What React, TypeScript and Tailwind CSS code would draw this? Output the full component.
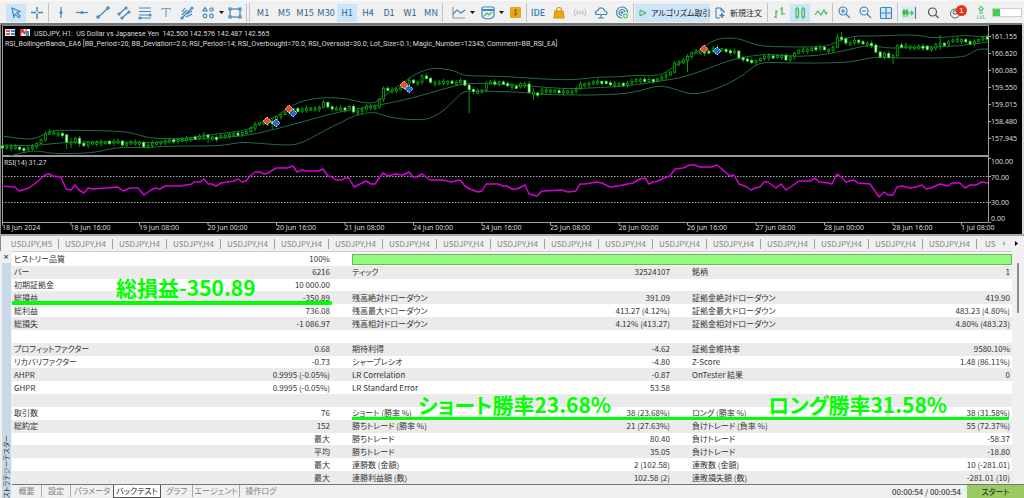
import React from "react";

type Point = [number, number];

const JP = "font-['Noto_Sans_CJK_JP',sans-serif]";

/* ---------- chart data ---------- */

const pricePath: Point[] = [
  [2, 146], [15, 147], [20, 149], [28, 148], [32, 147], [36, 144], [41, 140], [45, 134], [49, 132], [53, 133],
  [62, 134], [66, 142], [71, 142], [75, 138], [79, 143], [83, 146], [88, 142], [92, 143], [100, 142], [118, 141],
  [122, 145], [130, 142], [139, 142], [143, 147], [147, 146], [152, 143], [160, 142], [170, 140], [185, 139],
  [200, 136], [204, 135], [208, 137], [216, 138], [220, 136], [233, 134], [246, 132], [250, 129], [254, 125],
  [258, 123], [267, 121], [272, 123], [276, 117], [280, 115], [284, 113], [289, 109], [293, 108], [297, 112],
  [302, 109], [310, 108], [319, 108], [323, 102], [328, 107], [332, 108], [345, 108], [349, 106], [353, 112],
  [358, 111], [362, 109], [366, 106], [370, 107], [375, 107], [379, 100], [383, 88], [387, 90], [392, 90],
  [400, 88], [404, 84], [409, 80], [413, 83], [418, 82], [422, 76], [426, 78], [430, 82], [434, 83], [447, 81],
  [455, 83], [460, 80], [464, 84], [468, 89], [473, 91], [477, 92], [482, 90], [486, 83], [490, 82], [500, 82],
  [506, 85], [516, 87], [520, 84], [524, 82], [528, 92], [533, 93], [537, 94], [541, 90], [545, 90], [560, 91],
  [575, 91], [579, 84], [583, 84], [600, 81], [610, 84], [630, 83], [635, 79], [640, 80], [648, 79], [652, 81],
  [660, 78], [670, 73], [674, 63], [678, 62], [682, 62], [687, 57], [690, 54], [695, 51], [704, 52], [708, 52],
  [712, 48], [720, 49], [730, 52], [735, 51], [739, 58], [743, 59], [752, 62], [760, 59], [765, 56], [775, 56],
  [781, 55], [786, 60], [790, 57], [795, 53], [800, 50], [810, 49], [820, 47], [825, 50], [832, 51], [836, 37],
  [841, 38], [845, 43], [850, 43], [854, 40], [862, 43], [871, 44], [875, 51], [880, 57], [884, 53], [888, 57],
  [892, 59], [896, 46], [901, 45], [910, 47], [914, 48], [922, 45], [926, 50], [934, 47], [938, 42], [943, 45],
  [948, 42], [955, 39], [964, 40], [968, 44], [975, 41], [985, 37], [988, 37],
];

const upperBand: Point[] = [
  [2, 136], [22, 139], [36, 139], [50, 131], [60, 130], [118, 131], [133, 133], [148, 138], [170, 139], [190, 138],
  [203, 136], [215, 134], [246, 131], [262, 122], [274, 118], [292, 105], [306, 100], [326, 97], [350, 99],
  [362, 103], [376, 103], [383, 97], [395, 88], [406, 81], [412, 76], [422, 71], [433, 68], [445, 69], [456, 71],
  [463, 76], [500, 76], [540, 79], [575, 80], [595, 77], [620, 77], [635, 75], [660, 76], [672, 68], [690, 56],
  [700, 50], [712, 41], [722, 38], [737, 38], [748, 42], [760, 46], [785, 47], [825, 47], [836, 42], [850, 37],
  [858, 36], [880, 36], [900, 35], [920, 35], [930, 38], [950, 37], [965, 35], [980, 37], [988, 36],
];

const middleBand: Point[] = [
  [2, 145], [30, 146], [50, 144], [70, 142], [100, 142], [130, 142], [150, 143], [170, 141], [200, 139], [230, 137],
  [250, 135], [276, 129], [302, 122], [330, 114], [350, 110], [380, 105], [413, 98], [450, 87], [468, 83],
  [500, 84], [530, 86], [565, 89], [590, 88], [630, 86], [660, 81], [674, 79], [687, 76], [704, 70], [730, 60],
  [750, 56], [770, 54], [800, 57], [830, 54], [855, 48], [870, 45], [885, 48], [900, 48], [930, 47], [960, 46],
  [988, 42],
];

const lowerBand: Point[] = [
  [10, 156], [28, 151], [40, 151], [55, 154], [92, 153], [110, 149], [122, 147], [145, 148], [165, 146],
  [222, 146], [240, 142], [255, 143], [280, 145], [296, 145], [310, 139], [325, 130], [340, 123], [357, 114],
  [376, 112], [384, 116], [400, 119], [420, 120], [432, 118], [443, 111], [455, 100], [463, 91], [480, 91],
  [520, 92], [545, 95], [615, 95], [640, 91], [652, 87], [662, 86], [672, 88], [685, 93], [697, 94], [710, 91],
  [728, 84], [745, 74], [755, 65], [765, 62], [785, 63], [845, 63], [865, 59], [875, 57], [890, 58], [960, 58],
  [970, 54], [977, 49], [988, 49],
];

const rsiPath: Point[] = [
  [2, 186], [15, 187], [19, 191], [29, 188], [37, 182], [45, 175], [49, 174], [53, 176], [61, 177], [66, 189],
  [71, 190], [75, 185], [79, 190], [84, 193], [88, 188], [93, 189], [118, 187], [123, 191], [130, 188], [138, 188],
  [144, 195], [151, 190], [155, 188], [160, 189], [165, 186], [180, 186], [192, 184], [194, 182], [200, 182],
  [204, 179], [208, 184], [212, 184], [216, 186], [221, 183], [234, 181], [238, 179], [242, 182], [246, 181],
  [250, 176], [255, 172], [260, 172], [264, 174], [268, 173], [276, 168], [287, 168], [293, 166], [297, 172],
  [302, 170], [306, 171], [318, 171], [323, 169], [328, 176], [332, 177], [336, 180], [342, 180], [345, 178],
  [349, 178], [354, 187], [360, 184], [366, 181], [371, 184], [375, 184], [379, 178], [383, 173], [388, 176],
  [395, 174], [403, 175], [409, 172], [413, 177], [417, 177], [422, 174], [430, 180], [443, 180], [451, 182],
  [460, 180], [465, 186], [470, 189], [478, 192], [482, 191], [486, 184], [498, 184], [503, 186], [507, 186],
  [512, 189], [517, 189], [525, 185], [529, 194], [537, 196], [542, 191], [545, 191], [562, 190], [568, 192],
  [576, 191], [580, 184], [585, 184], [597, 182], [602, 183], [610, 187], [618, 186], [633, 183], [640, 179],
  [645, 178], [649, 184], [653, 182], [658, 181], [664, 178], [670, 176], [675, 169], [683, 168], [690, 165],
  [695, 165], [700, 167], [712, 167], [717, 165], [723, 170], [730, 176], [734, 175], [739, 184], [747, 187],
  [751, 190], [755, 188], [760, 187], [764, 182], [768, 182], [776, 188], [781, 184], [786, 190], [792, 186],
  [799, 181], [810, 181], [815, 178], [819, 182], [828, 183], [832, 184], [837, 174], [841, 177], [846, 182],
  [854, 180], [858, 183], [870, 184], [875, 191], [879, 197], [884, 192], [888, 195], [893, 195], [897, 187],
  [902, 186], [910, 188], [916, 187], [922, 185], [926, 189], [931, 188], [940, 184], [948, 186], [952, 183],
  [960, 183], [965, 188], [970, 185], [976, 185], [982, 182], [988, 183],
];

// candle x, top and bottom of the long shadows
const longWicks: [number, number, number][] = [
  [49, 129, 135], [66, 134, 149], [71, 138, 148], [79, 136, 147], [208, 134, 143], [272, 118, 130],
  [362, 107, 115], [468, 83, 113], [533, 88, 100], [687, 54, 72], [841, 32, 42], [892, 54, 64], [938, 35, 50],
];

const priceLabels: [string, number][] = [
  ["161.155", 36], ["160.620", 53], ["160.085", 70], ["159.550", 87], ["159.015", 104], ["158.480", 121],
  ["157.945", 138],
];

const rsiLabels: [string, number][] = [["100.00", 161], ["70.00", 177], ["30.00", 202], ["0.00", 218]];

const timeLabels = [
  "18 Jun 2024", "18 Jun 16:00", "19 Jun 08:00", "20 Jun 00:00", "20 Jun 16:00", "21 Jun 08:00", "24 Jun 00:00",
  "24 Jun 16:00", "25 Jun 08:00", "26 Jun 00:00", "26 Jun 16:00", "27 Jun 08:00", "28 Jun 00:00", "28 Jun 16:00",
  "1 Jul 08:00",
];

const sells: Point[] = [[267, 121], [289, 109], [404, 85], [704, 49]];
const buys: Point[] = [[276, 123], [293, 113], [409, 89], [717, 51]];

const valueAt = (path: Point[], x: number) => {
  for (let i = 1; i < path.length; i++) {
    const [x0, y0] = path[i - 1];
    const [x1, y1] = path[i];
    if (x <= x1) return y0 + ((y1 - y0) * (x - x0)) / (x1 - x0);
  }
  return path[path.length - 1][1];
};

const toPoints = (path: Point[]) => path.map((p) => p.join(",")).join(" ");

// smooth curve through the points, by quadratic segments between midpoints
const toCurve = (path: Point[]) => {
  let d = `M${path[0][0]} ${path[0][1]}`;
  for (let i = 1; i < path.length - 1; i++) {
    const mx = (path[i][0] + path[i + 1][0]) / 2;
    const my = (path[i][1] + path[i + 1][1]) / 2;
    d += ` Q${path[i][0]} ${path[i][1]} ${mx} ${my}`;
  }
  const last = path[path.length - 1];
  return `${d} L${last[0]} ${last[1]}`;
};

const Candles = () => {
  const step = 68.5 / 16;
  const items = [];
  for (let i = 0; i < 231; i++) {
    const x = 2.5 + i * step;
    const open = valueAt(pricePath, Math.max(2, x - step));
    const close = valueAt(pricePath, x);
    const falling = close - open > 1 || (Math.abs(close - open) <= 1 && i % 5 === 0);
    const top = Math.min(open, close);
    const height = Math.max(2, Math.abs(close - open));
    const long = longWicks.find((w) => Math.abs(w[0] - x) < step / 2);
    const high = long ? long[1] : top - 1 - (i % 4) * 0.6;
    const low = long ? long[2] : top + height + 1 + (i % 3) * 0.8;
    items.push(
      <g key={i}>
        <line x1={x} x2={x} y1={high} y2={low} stroke="#009c00" />
        <rect
          x={x - 1}
          y={top}
          width={2}
          height={height}
          fill={falling ? "#f4fff4" : "#000"}
          stroke={falling ? "#35e835" : "#00b400"}
          strokeWidth={0.8}
        />
      </g>
    );
  }
  return <>{items}</>;
};

const Marker = ({ at, color }: { at: Point; color: string }) => (
  <g transform={`translate(${at[0]} ${at[1]})`}>
    <path d="M0-4 4 0 0 4-4 0Z" fill={color} stroke="#e8e8e8" strokeWidth="1" strokeDasharray="1.5 1" />
    <circle r="1.8" fill={color} />
  </g>
);

const Chart = () => (
  <svg viewBox="0 23 1024 213" className="block h-auto w-full shrink-0 bg-black" role="img" aria-label="USDJPY H1">
    <rect x="0" y="23" width="1024" height="2" fill="#747474" />
    <rect x="0" y="23" width="1" height="213" fill="#8a8a8a" />
    <rect x="1022" y="23" width="2" height="213" fill="#d8d8d8" />
    <rect x="0" y="234" width="1024" height="2" fill="#a8a8a8" />

    {/* pane frames */}
    <path d="M2.500 25V222.500H988.500V25" fill="none" stroke="#a0a0a0" />
    <rect x="2" y="25" width="987" height="1" fill="#8a8a8a" />
    <rect x="2" y="155" width="987" height="2" fill="#9a9a9a" />
    <path d="M2 176.500H988M2 202.500H988" stroke="#a8a8a8" strokeDasharray="1.500 1.500" />

    <g fill="none" stroke="#236b48">
      <path d={toCurve(upperBand)} />
      <path d={toCurve(middleBand)} />
      <path d={toCurve(lowerBand)} />
    </g>
    <Candles />
    {sells.map((p) => <Marker key={p[0]} at={p} color="#f0492e" />)}
    {buys.map((p) => <Marker key={p[0]} at={p} color="#1f6fd0" />)}
    <polyline points={toPoints(rsiPath)} fill="none" stroke="#d800d8" strokeWidth="1.500" strokeLinejoin="round" />

    {/* one-click trading and market depth toggles */}
    <rect x="5" y="29" width="10" height="7" fill="#f3f3f3" />
    <path d="M6 30h4v2H6zM6 33h4v2H6z" fill="#e2544c" />
    <path d="M11 30h4v2h-4zM11 33h4v2h-4z" fill="#3c8bd0" />
    <rect x="20" y="29" width="10" height="7" fill="#f3f3f3" />
    <path d="M20 29h3l2 3 1-3h1l-2 6-3-3-1 4h-1z" fill="#d83a3a" />
    <path d="M26 31h3v5h-3z" fill="#3c8bd0" />

    <g className="font-[Roboto,sans-serif] text-[7px]" fill="#dcdcdc">
      <text x="34" y="36" xmlSpace="preserve">USDJPY, H1:  US Dollar vs Japanese Yen  142.500 142.576 142.487 142.565</text>
      <text x="5" y="46">
        RSI_BollingerBands_EA6 [BB_Period=20; BB_Deviation=2.0; RSI_Period=14; RSI_Overbought=70.0; RSI_Oversold=30.0; Lot_Size=0.1; Magic_Number=12345; Comment=BB_RSI_EA]
      </text>
    </g>
    <g className="font-['Noto_Sans',sans-serif] text-[7px]" fill="#dcdcdc">
      <text x="4" y="165">RSI(14) 31.27</text>
      {[...priceLabels, ...rsiLabels].map(([label, y]) => (
        <text key={label} x="991" y={y + 3}>{label}</text>
      ))}
      {timeLabels.map((label, i) => (
        <text key={label} x={2 + i * 68.5} y="230">{label}</text>
      ))}
    </g>
    <g stroke="#a8a8a8">
      {priceLabels.map(([label, y]) => <line key={label} x1="989" x2="991" y1={y + 0.5} y2={y + 0.5} />)}
      {[158, 176, 202, 222].map((y) => <line key={y} x1="989" x2="991" y1={y + 0.5} y2={y + 0.5} />)}
      {timeLabels.map((label, i) => <line key={label} x1={2.5 + i * 68.5} x2={2.5 + i * 68.5} y1="222" y2="225" />)}
    </g>
  </svg>
);

/* ---------- toolbar ---------- */

const Tool = ({ label, active, children }: { label: string; active?: boolean; children: React.ReactNode }) => (
  <button
    type="button"
    aria-label={label}
    className={`flex h-[18px] w-5 shrink-0 items-center justify-center ${active ? "bg-[#cbe4f8]" : ""}`}
  >
    <svg viewBox="0 0 20 18" className="h-[18px] w-5" fill="none" stroke="#3d88bd" strokeWidth="1.200">
      {children}
    </svg>
  </button>
);

const Caret = () => (
  <svg viewBox="0 0 5 3" className="h-[3px] w-[5px] shrink-0" aria-hidden="true">
    <path d="M0 0h5L2.500 3z" fill="#111" />
  </svg>
);

const Divider = () => <div className="mx-px h-[19px] w-px shrink-0 bg-[#c4c4c4]" />;

const timeframes = ["M1", "M5", "M15", "M30", "H1", "H4", "D1", "W1", "MN"];

const Toolbar = () => (
  <div className="flex h-[23px] w-full shrink-0 items-center overflow-hidden border-t border-[#fafafa] bg-[#f0f0f0] pt-px pl-1.5">
    <div className="flex gap-px">
      <Tool label="Cursor" active>
        <path d="M6 4l8 3.500-3.200 1.200 3.400 3.400-1.500 1.500-3.400-3.400L7.800 13z" />
      </Tool>
      <Tool label="Crosshair">
        <path d="M10 3v4.500M10 9.500V15M4 8.500h5M11 8.500h5" strokeWidth="1.500" />
      </Tool>
    </div>
    <Divider />
    <div className="ml-px flex items-center gap-px">
      <Tool label="Vertical line">
        <path d="M10 3v11" />
        <circle cx="10" cy="8.500" r="1.500" fill="#3d88bd" stroke="none" />
      </Tool>
      <Tool label="Horizontal line">
        <path d="M4 8.500h12" />
        <circle cx="10" cy="8.500" r="1.500" fill="#3d88bd" stroke="none" />
      </Tool>
      <Tool label="Trendline">
        <path d="M5 13.500L15 4" />
        <circle cx="5" cy="13" r="1.200" />
        <circle cx="15" cy="4" r="1.200" />
      </Tool>
      <Tool label="Channel">
        <path d="M5 10l7-6M8 14l7-6" />
        <circle cx="5" cy="10" r="1" fill="#f0f0f0" />
        <circle cx="12" cy="4" r="1" fill="#f0f0f0" />
        <circle cx="8" cy="14" r="1" fill="#f0f0f0" />
        <circle cx="15" cy="8" r="1" fill="#f0f0f0" />
      </Tool>
      <Tool label="Fibonacci">
        <path d="M4 4h12M4 7.500h12M4 11h12M4 14h12" />
        <circle cx="5" cy="14" r="1" fill="#f0f0f0" />
        <circle cx="15" cy="11" r="1" fill="#f0f0f0" />
      </Tool>
      <Tool label="Text">
        <path d="M6 6V4.500h8V6M10 4.500V13" stroke="#6ca5cd" />
      </Tool>
      <Tool label="Gann fan">
        <path d="M5 14L15 4M5 8l3-4M5 11l5-5M9 13l6-3M10 10l5-3" />
        <circle cx="5" cy="14" r="1" fill="#f0f0f0" />
        <circle cx="15" cy="4" r="1" fill="#f0f0f0" />
      </Tool>
      <Tool label="Shapes">
        <path d="M7 3.500L9 7H5z" />
        <rect x="12" y="4" width="3" height="3" rx="1" />
        <circle cx="7" cy="12" r="1.800" />
        <circle cx="13.500" cy="12" r="1.800" />
      </Tool>
      <Caret />
      <Tool label="Rectangle">
        <rect x="5" y="5" width="10" height="8" />
        <path d="M4 4h2v2H4zM14 4h2v2h-2zM4 12h2v2H4zM14 12h2v2h-2z" fill="#f0f0f0" />
      </Tool>
    </div>
    <Divider />
    <Divider />
    <div className="ml-0.5 flex gap-px">
      {timeframes.map((tf) => (
        <button
          key={tf}
          type="button"
          className={`h-[18px] w-5 shrink-0 font-['Noto_Sans_CJK_JP',sans-serif] text-[9px] leading-[18px] text-[#28648f] ${tf === "H1" ? "bg-[#cbe4f8]" : ""}`}
        >
          {tf}
        </button>
      ))}
    </div>
    <Divider />
    <div className="ml-[5px] flex items-center gap-px">
      <Tool label="Chart type">
        <path d="M4 3v11h12" stroke="#9a9a9a" />
        <path d="M4 10l4-4 4 3 4-3" />
      </Tool>
      <Caret />
      <span className="w-px" />
      <Tool label="Indicators">
        <path d="M5 3h10a1 1 0 0 1 1 1v8q-2 3-6 3t-6-3V4a1 1 0 0 1 1-1z" />
        <path d="M4 6h12" strokeWidth="2" />
        <path d="M6 12l3-3 2 2 3-3" stroke="#43b85a" />
      </Tool>
      <Caret />
      <Tool label="Market prices">
        <rect x="5" y="3" width="11" height="11" rx="1" fill="#e8a817" stroke="none" />
        <path d="M12.500 6.500c-3-1.500-4 .8-2 1.700 2.500 1 2 3.300-1.800 2M10.500 5v7" stroke="#9c6c00" strokeWidth="1" />
      </Tool>
    </div>
    <Divider />
    <div className="flex gap-px">
      <button type="button" className="h-[18px] w-5 shrink-0 font-['Noto_Sans_CJK_JP',sans-serif] text-[9px] leading-[18px] font-medium text-[#2f7db5]">IDE</button>
      <Tool label="Market">
        <path d="M6 7h8l1 7H5z" fill="#eaa614" stroke="#d99710" />
        <path d="M7.500 8V6q0-2.500 2.500-2.500T12.500 6v2" stroke="#d99710" />
      </Tool>
      <Tool label="Signals">
        <g stroke="#c4c4c4">
          <path d="M7.500 6.500q-1.500 2 0 4M5.500 5q-2.500 3.500 0 7M12.500 6.500q1.500 2 0 4M14.500 5q2.500 3.500 0 7" />
          <circle cx="10" cy="8.500" r="1" />
        </g>
      </Tool>
      <Tool label="VPS">
        <path d="M6.500 10.500Q4 10.500 4.500 8.500T7 6.500Q7.500 3.500 10.500 4t3 3q2.500 0 2.500 2t-2 1.500zM10 10.500V14M7 14h6" />
      </Tool>
      <Tool label="Copy">
        <path d="M10 14a5.500 5.500 0 1 1 5.500-5M10 11.500A3 3 0 1 1 13 8.500" />
        <circle cx="10" cy="8.500" r="1" />
        <circle cx="13.500" cy="12" r="3" fill="#3cb54a" stroke="#dff3e0" />
        <path d="M12 12h3M13.500 10.500v3" stroke="#fff" />
      </Tool>
    </div>
    <Divider />
    <button type="button" className={`flex h-[18px] w-[75px] shrink-0 items-center gap-1 bg-[#cbe4f8] pl-1 text-[8px] leading-[18px] whitespace-nowrap text-[#222] ${JP}`}>
      <svg viewBox="0 0 8 8" className="size-2 shrink-0" fill="none" stroke="#2fae4e" aria-hidden="true">
        <path d="M1 1l6 3-6 3z" />
      </svg>
      <span className="[font-feature-settings:'palt']">アルゴリズム取引</span>
    </button>
    <button type="button" className={`ml-1 flex h-[18px] w-[52px] shrink-0 items-center gap-1 text-[8px] leading-[18px] whitespace-nowrap text-[#222] ${JP}`}>
      <svg viewBox="0 0 12 12" className="size-3 shrink-0" fill="none" stroke="#2f7db5" aria-hidden="true">
        <path d="M6 11H2V1h5l3 3v2M7 1v3h3" />
        <path d="M8 6v5M5.500 8.500h5" strokeWidth="1.500" />
      </svg>
      新規注文
    </button>
    <Divider />
    <div className="flex gap-px">
      <Tool label="Bars">
        <path d="M7 6v8M5 13h2M7 8h2M13 3v8M11 5h2M13 10h3" stroke="#3cbb50" />
      </Tool>
      <Tool label="Candles" active>
        <path d="M6 5h2.500v8H6zM12 5h2.500v8H12zM7.200 3v2M7.200 13v2M13.200 3v2M13.200 13v2" stroke="#3cbb50" />
      </Tool>
      <Tool label="Line">
        <path d="M4 11l3-4 3 4 3-5 2 4 1-2" stroke="#3cbb50" />
      </Tool>
    </div>
    <Divider />
    <div className="flex gap-px">
      <Tool label="Zoom in">
        <circle cx="9" cy="7" r="4" />
        <path d="M12 10l4 4M7 7h4M9 5v4" />
      </Tool>
      <Tool label="Zoom out">
        <circle cx="9" cy="7" r="4" />
        <path d="M12 10l4 4M7 7h4" />
      </Tool>
      <Tool label="Tile windows">
        <rect x="4.500" y="3.500" width="11" height="11" rx="1" fill="#d7e9f6" />
        <path d="M10 3.500v11M4.500 9h11" />
      </Tool>
    </div>
    <Divider />
    <Tool label="Chart shift">
      <rect x="3" y="2" width="14" height="14" fill="#dfeaf2" stroke="none" />
      <path d="M5 5v8M8 5v8M4 7h2v3H4zM7 7h2v3H7zM10 9h4M12 7l2 2-2 2" stroke="#3cbb50" />
      <path d="M16.500 3v12" />
    </Tool>
    <div className="ml-1 flex gap-1">
      <Tool label="Search">
        <circle cx="9.500" cy="8" r="4" stroke="#555" />
        <path d="M12.500 11l3 3" stroke="#555" />
      </Tool>
      <button type="button" aria-label="Account" className="relative h-[18px] w-5 shrink-0">
        <svg viewBox="0 0 20 18" className="h-[18px] w-5" fill="none" stroke="#555">
          <circle cx="8" cy="9.500" r="4.500" />
          <circle cx="8" cy="8.500" r="1.800" />
        </svg>
        <span className="absolute top-px right-0 size-[11px] rounded-full bg-[#e2341d] text-center font-['Liberation_Sans',sans-serif] text-[8px] leading-[11px] text-white">1</span>
      </button>
    </div>
    <button type="button" aria-label="Level" className="ml-1 flex h-[18px] w-5 shrink-0 flex-col items-center">
      <svg viewBox="0 0 8 9" className="mt-px h-[9px] w-2" fill="none" stroke="#3cbb50" aria-hidden="true">
        <path d="M4 1l2.500 3H5v2H3V4H1.500zM2 8h4" />
      </svg>
      <span className="font-['Liberation_Sans',sans-serif] text-[5px] leading-[6px] text-[#3cbb50]">LVL</span>
    </button>
    <div className="mr-0.5 ml-px h-[9px] min-w-0 flex-1 border border-[#cfcfcf] bg-white">
      <div className="h-full w-1/4 bg-[#43cf46]" />
    </div>
  </div>
);

/* ---------- chart tabs ---------- */

const chartTabs = ["USDJPY,M5", ...Array<string>(17).fill("USDJPY,H4")];

const ChartTabs = () => (
  <div className={`flex h-[15px] w-full shrink-0 items-center border-l border-[#8a8a8a] bg-[#f0f0f0] pl-1 text-[8px] leading-[10px] text-[#858585] ${JP}`}>
    <div className="flex min-w-0 flex-1 overflow-hidden">
      {chartTabs.map((name, i) => (
        <button key={i} type="button" className="h-[10px] w-[54px] shrink-0 border-r border-[#a0a0a0] text-center">
          {name}
        </button>
      ))}
      <button type="button" className="ml-2 h-[10px] shrink-0">US</button>
    </div>
    <button type="button" aria-label="Scroll left" className="w-[13px]">
      <svg viewBox="0 0 3 5" className="h-[5px] w-[3px]" fill="#b0b0b0"><path d="M3 0v5L0 2.500z" /></svg>
    </button>
    <button type="button" aria-label="Scroll right" className="w-[9px]">
      <svg viewBox="0 0 3 5" className="h-[5px] w-[3px]" fill="#000"><path d="M0 0v5l3-2.500z" /></svg>
    </button>
  </div>
);

/* ---------- strategy tester ---------- */

const rows = [
  ["バー", "6216", "ティック", "32524107", "銘柄", "1"],
  ["初期証拠金", "10 000.00", "", "", "", ""],
  ["総損益", "-350.89", "残高絶対ドローダウン", "391.09", "証拠金絶対ドローダウン", "419.90"],
  ["総利益", "736.08", "残高最大ドローダウン", "413.27 (4.12%)", "証拠金最大ドローダウン", "483.23 (4.80%)"],
  ["総損失", "-1 086.97", "残高相対ドローダウン", "4.12% (413.27)", "証拠金相対ドローダウン", "4.80% (483.23)"],
  ["", "", "", "", "", ""],
  ["プロフィットファクター", "0.68", "期待利得", "-4.62", "証拠金維持率", "9580.10%"],
  ["リカバリファクター", "-0.73", "シャープレシオ", "-4.80", "Z-Score", "1.48 (86.11%)"],
  ["AHPR", "0.9995 (-0.05%)", "LR Correlation", "-0.87", "OnTester 結果", "0"],
  ["GHPR", "0.9995 (-0.05%)", "LR Standard Error", "53.58", "", ""],
  ["", "", "", "", "", ""],
  ["取引数", "76", "ショート (勝率 %)", "38 (23.68%)", "ロング (勝率 %)", "38 (31.58%)"],
  ["総約定", "152", "勝ちトレード (勝率 %)", "21 (27.63%)", "負けトレード (負率 %)", "55 (72.37%)"],
  ["", "最大", "勝ちトレード", "80.40", "負けトレード", "-58.37"],
  ["", "平均", "勝ちトレード", "35.05", "負けトレード", "-18.80"],
  ["", "最大", "連勝数 (金額)", "2 (102.58)", "連敗数 (金額)", "10 (-281.01)"],
  ["", "最大", "連勝利益額 (数)", "102.58 (2)", "連敗損失額 (数)", "-281.01 (10)"],
];

const cellStyles = ["pl-0.5", "pr-0.5 text-right", "pl-5", "pr-0.5 text-right", "pl-5", "pr-0.5 text-right"];

const Report = () => (
  <table className={`h-[231px] w-full table-fixed border-collapse text-[8px] leading-[12px] whitespace-nowrap text-[#333] [font-feature-settings:'palt'] ${JP}`}>
    <colgroup>
      <col className="w-[16%]" />
      <col className="w-[16%]" />
      <col className="w-[18%]" />
      <col className="w-[16%]" />
      <col className="w-[18%]" />
      <col className="w-[16%]" />
    </colgroup>
    <tbody>
      <tr>
        <td className="p-0 pl-0.5">ヒストリー品質</td>
        <td className="p-0 pr-0.5 text-right">100%</td>
        <td colSpan={4} className="p-0 pl-5">
          <div className="h-[11px] border border-[#69b85c] bg-[#93fc80]" />
        </td>
      </tr>
      {rows.map((row, r) => (
        <tr key={r} className={r % 2 === 0 ? "bg-[#ebebeb]" : ""}>
          {row.map((cell, c) => (
            <td key={c} className={`p-0 ${cellStyles[c]}`}>{cell || "\u00a0"}</td>
          ))}
        </tr>
      ))}
    </tbody>
  </table>
);

const Note = ({ place, children }: { place: string; children: React.ReactNode }) => (
  <span className={`absolute text-[21px] leading-6 font-bold whitespace-nowrap text-[#00ff00] [font-feature-settings:'palt'] ${JP} ${place}`}>
    {children}
  </span>
);

const Tester = () => (
  <div className="flex w-full shrink-0 bg-[#f0f0f0]">
    <aside className="flex w-3 shrink-0 flex-col items-center">
      <button type="button" aria-label="Close" className="h-3 text-[9px] leading-[10px] text-[#222]">×</button>
      <div className="flex w-[9px] flex-1 items-end justify-center bg-[#c8d8e8]">
        <span className={`rotate-180 text-[7px] leading-[9px] whitespace-nowrap text-[#333] [font-feature-settings:'palt'] [text-orientation:sideways] [writing-mode:vertical-rl] ${JP}`}>
          ストラテジーテスター
        </span>
      </div>
    </aside>
    <div className="flex min-w-0 flex-1 flex-col">
      <div className="flex">
        <div className="relative min-w-0 flex-1 border-t border-[#d0d0d0] bg-white pt-px">
          <Report />
          <div className="absolute top-[49px] left-0 h-1 w-[32%] bg-[#00ff00]" />
          <div className="absolute top-[165px] right-[3px] left-[34%] h-[3px] bg-[#00ff00]" />
          <Note place="top-[23px] left-[10%] ml-1">総損益-350.89</Note>
          <Note place="top-[140px] left-[40%] ml-1.5">ショート勝率23.68%</Note>
          <Note place="top-[140px] left-[75%] ml-1.5">ロング勝率31.58%</Note>
        </div>
        <div className="w-3 shrink-0 pt-3 pl-[5px]">
          <div className="h-[50px] w-0.5 bg-[#8c8c8c]" />
        </div>
      </div>
      <div className={`flex h-[14px] items-start border-t border-[#777] text-[8px] leading-[12px] whitespace-nowrap text-[#808080] ${JP}`}>
        <div className="flex flex-1 items-start [font-feature-settings:'palt']">
          <button type="button" className="w-[30px] border-r border-[#aaa]">概要</button>
          <button type="button" className="w-[29px] border-r border-[#aaa]">設定</button>
          <button type="button" className="w-[42px]">パラメータ</button>
          <button type="button" className="h-[13px] w-12 border-x border-b border-[#555] bg-white text-[#222]">バックテスト</button>
          <button type="button" className="w-8 border-r border-[#aaa]">グラフ</button>
          <button type="button" className="w-[47px] border-r border-[#aaa]">エージェント</button>
          <button type="button" className="w-[42px]">操作ログ</button>
        </div>
        <span className="mr-1.5 pt-px text-[#222]">00:00:54 / 00:00:54</span>
        <button type="button" className="h-[13px] w-[57px] bg-[#9aca62] pt-px text-[#222] [font-feature-settings:'palt']">スタート</button>
      </div>
    </div>
  </div>
);

export default function App() {
  return (
    <main className="flex w-full flex-col overflow-hidden bg-[#f0f0f0]">
      <Toolbar />
      <Chart />
      <ChartTabs />
      <Tester />
    </main>
  );
}
